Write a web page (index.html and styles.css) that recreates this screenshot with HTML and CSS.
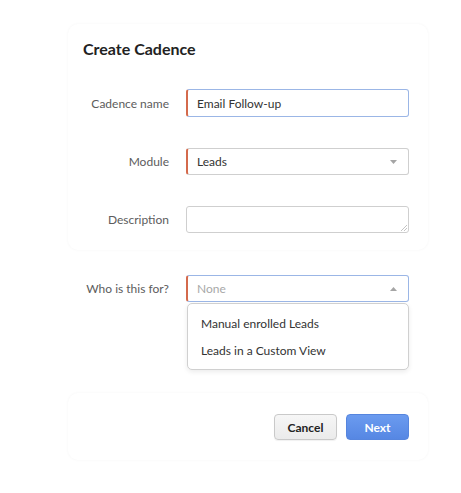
FILE: index.html
```html
<!DOCTYPE html>
<html>
<head>
<meta charset="utf-8">
<link rel="stylesheet" href="styles.css">
</head>
<body>
<div class="page">
  <section class="panel panel-top">
    <h1 class="title">Create Cadence</h1>
    <div class="row row-first">
      <label class="label">Cadence name</label>
      <div class="field field-text mandatory focused">Email Follow-up</div>
    </div>
    <div class="row">
      <label class="label">Module</label>
      <div class="field field-select mandatory">
        <span>Leads</span>
        <svg class="caret" width="7" height="4" viewBox="0 0 7 4"><path d="M0 0H7L3.5 4Z" fill="#a5a5a5"/></svg>
      </div>
    </div>
    <div class="row">
      <label class="label">Description</label>
      <div class="field field-area">
        <svg class="grip" width="7" height="7" viewBox="0 0 7 7"><path d="M7 1L1 7M7 4L4 7" stroke="#bdbdbd" stroke-width="0.9"/></svg>
      </div>
    </div>
  </section>

  <section class="middle">
    <div class="row">
      <label class="label">Who is this for?</label>
      <div class="combo">
        <div class="field field-select mandatory focused">
          <span class="placeholder">None</span>
          <svg class="caret" width="7" height="4" viewBox="0 0 7 4"><path d="M0 4H7L3.5 0Z" fill="#a5a5a5"/></svg>
        </div>
        <ul class="menu">
          <li class="menu-item">Manual enrolled Leads</li>
          <li class="menu-item">Leads in a Custom View</li>
        </ul>
      </div>
    </div>
  </section>

  <section class="panel panel-foot">
    <button class="btn btn-cancel">Cancel</button>
    <button class="btn btn-next">Next</button>
  </section>
</div>
</body>
</html>
```
FILE: styles.css
```css
html, body {
  margin: 0;
  padding: 0;
  background: #ffffff;
}
body {
  font-family: Lato, "Open Sans", sans-serif;
  width: 461px;
  height: 493px;
  overflow: hidden;
}
.page {
  padding: 24px 0 0 68px;
  width: 360px;
}
.panel {
  background: #fff;
  border-radius: 10px;
  box-shadow: 0 0 3px rgba(0, 0, 0, 0.045);
  box-sizing: border-box;
}
.panel-top {
  height: 226px;
  padding: 15px 19px 0 0;
}
.title {
  margin: 0 0 30px 15px;
  font-size: 16px;
  line-height: 20px;
  font-weight: 700;
  color: #222;
}
.row {
  display: flex;
  align-items: center;
  margin-top: 31px;
}
.row-first {
  margin-top: 0;
}
.label {
  width: 101px;
  text-align: right;
  font-size: 12px;
  color: #5c5c5c;
  margin-right: 17px;
  flex: none;
}
.field {
  box-sizing: border-box;
  width: 223px;
  height: 27px;
  border: 1px solid #cfcfcf;
  border-radius: 3px;
  background: #fff;
  display: flex;
  align-items: center;
  padding: 0 11px 0 9px;
  font-size: 12px;
  color: #333;
}
.field-text {
  height: 28px;
}
.mandatory {
  border-left: 2px solid #d46a4c;
}
.focused {
  border-top-color: #9bb6e6;
  border-right-color: #9bb6e6;
  border-bottom-color: #9bb6e6;
}
.field-select {
  justify-content: space-between;
}
.caret {
  display: block;
}
.field-area {
  justify-content: flex-end;
  align-items: flex-end;
  padding: 0 1px 1px 0;
}
.grip {
  display: block;
}
.middle {
  height: 143px;
  padding-top: 25px;
  box-sizing: border-box;
}
.middle .row {
  margin-top: 0;
  align-items: flex-start;
}
.middle .label {
  line-height: 27px;
}
.combo {
  position: relative;
}
.placeholder {
  color: #a8a8a8;
}
.menu {
  position: absolute;
  top: 28px;
  left: 1px;
  width: 222px;
  height: 67px;
  box-sizing: border-box;
  margin: 0;
  padding: 6px 0 0 0;
  list-style: none;
  background: #fff;
  border: 1px solid #d0d0d0;
  border-radius: 5px;
  box-shadow: 0 2px 5px rgba(0, 0, 0, 0.08);
}
.menu-item {
  font-size: 12px;
  color: #333;
  padding-left: 13px;
  line-height: 27px;
}
.panel-foot {
  height: 67px;
  display: flex;
  justify-content: flex-end;
  align-items: flex-start;
  padding: 21px 19px 0 0;
  gap: 9px;
}
.btn {
  font-family: Lato, "Open Sans", sans-serif;
  font-size: 12px;
  font-weight: 700;
  height: 26px;
  width: 63px;
  border-radius: 4px;
  cursor: pointer;
  padding: 0;
}
.btn-cancel {
  background: linear-gradient(#f6f6f6, #ebebeb);
  border: 1px solid #c9c9c9;
  color: #222;
  box-shadow: 0 1px 1px rgba(0,0,0,0.06);
}
.btn-next {
  background: linear-gradient(#6b9bef, #5687e3);
  border: 1px solid #5685de;
  color: #fff;
}
```
